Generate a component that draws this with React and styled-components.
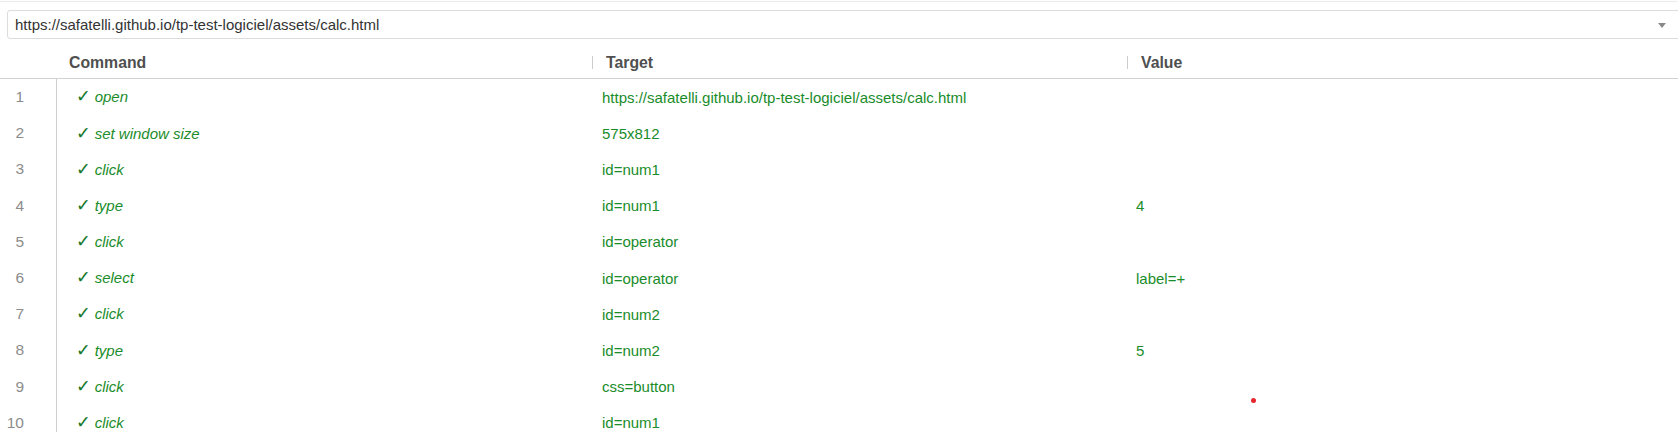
import React from 'react';
import styled, { createGlobalStyle } from 'styled-components';

const GlobalStyle = createGlobalStyle`
  html, body {
    margin: 0;
    padding: 0;
    background: #ffffff;
    overflow: hidden;
  }
  body {
    font-family: "Liberation Sans", Arial, sans-serif;
  }
`;

const Page = styled.div`
  position: relative;
  height: 432px;
  overflow: hidden;
`;

const TopLine = styled.div`
  height: 1px;
  margin-top: 1px;
  background: #ececec;
`;

const UrlBar = styled.div`
  display: flex;
  align-items: center;
  justify-content: space-between;
  box-sizing: border-box;
  height: 29px;
  margin: 8px -6px 0 7px;
  padding: 0 17px 0 7px;
  border: 1px solid #dcdcdc;
  border-radius: 3px;
  font-size: 15px;
  color: #333333;
`;

const Caret = styled.span`
  width: 0;
  height: 0;
  border-left: 4.5px solid transparent;
  border-right: 4.5px solid transparent;
  border-top: 5px solid #8a8a8a;
  margin-top: 2px;
`;

const Grid = styled.div`
  display: grid;
  grid-template-columns: 57px 535px 535px 1fr;
`;

const HeaderRow = styled(Grid)`
  height: 40px;
  box-sizing: border-box;
  border-bottom: 1px solid #d2d2d2;
`;

const HeaderCell = styled.div`
  position: relative;
  padding: 14px 0 0 ${(p) => p.$pad}px;
  line-height: 19px;
  font-size: 15.8px;
  font-weight: 700;
  color: #4f4f4f;

  ${(p) =>
    p.$divider &&
    `
    &::before {
      content: '';
      position: absolute;
      left: 0;
      top: 17px;
      width: 1px;
      height: 13px;
      background: #cccccc;
    }
  `}
`;

const Row = styled(Grid)`
  height: 36.2px;
  align-items: center;
  font-size: 15px;
  color: #1a8c2a;
`;

const Index = styled.div`
  align-self: stretch;
  display: flex;
  align-items: center;
  justify-content: flex-end;
  padding-right: 32px;
  border-right: 1px solid #cfcfcf;
  font-size: 15.5px;
  color: #8c8c8c;
`;

const CommandCell = styled.div`
  padding-left: 19px;
  font-style: italic;
`;

const Check = styled.span`
  font-family: "DejaVu Sans", sans-serif;
  font-style: normal;
  font-weight: 700;
  font-size: 17.5px;
  line-height: 1;
  color: #17782a;
  margin-right: 4px;
`;

const Cell = styled.div`
  padding-left: ${(p) => p.$pad}px;
  white-space: nowrap;
`;

const Dot = styled.span`
  position: absolute;
  left: 1251px;
  top: 398px;
  width: 5px;
  height: 5px;
  border-radius: 50%;
  background: #e8262e;
`;

const steps = [
  { command: 'open', target: 'https://safatelli.github.io/tp-test-logiciel/assets/calc.html', value: '' },
  { command: 'set window size', target: '575x812', value: '' },
  { command: 'click', target: 'id=num1', value: '' },
  { command: 'type', target: 'id=num1', value: '4' },
  { command: 'click', target: 'id=operator', value: '' },
  { command: 'select', target: 'id=operator', value: 'label=+' },
  { command: 'click', target: 'id=num2', value: '' },
  { command: 'type', target: 'id=num2', value: '5' },
  { command: 'click', target: 'css=button', value: '' },
  { command: 'click', target: 'id=num1', value: '' },
];

const App = () => {
  return (
    <>
      <GlobalStyle />
      <Page>
        <TopLine />
        <UrlBar>
          <span>https://safatelli.github.io/tp-test-logiciel/assets/calc.html</span>
          <Caret />
        </UrlBar>

        <HeaderRow>
          <div />
          <HeaderCell $pad={12}>Command</HeaderCell>
          <HeaderCell $pad={14} $divider>Target</HeaderCell>
          <HeaderCell $pad={14} $divider>Value</HeaderCell>
        </HeaderRow>

        {steps.map((step, i) => (
          <Row key={i}>
            <Index>{i + 1}</Index>
            <CommandCell>
              <Check>✓</Check>
              {step.command}
            </CommandCell>
            <Cell $pad={10}>{step.target}</Cell>
            <Cell $pad={9}>{step.value}</Cell>
          </Row>
        ))}

        <Dot />
      </Page>
    </>
  );
};

export default App;
